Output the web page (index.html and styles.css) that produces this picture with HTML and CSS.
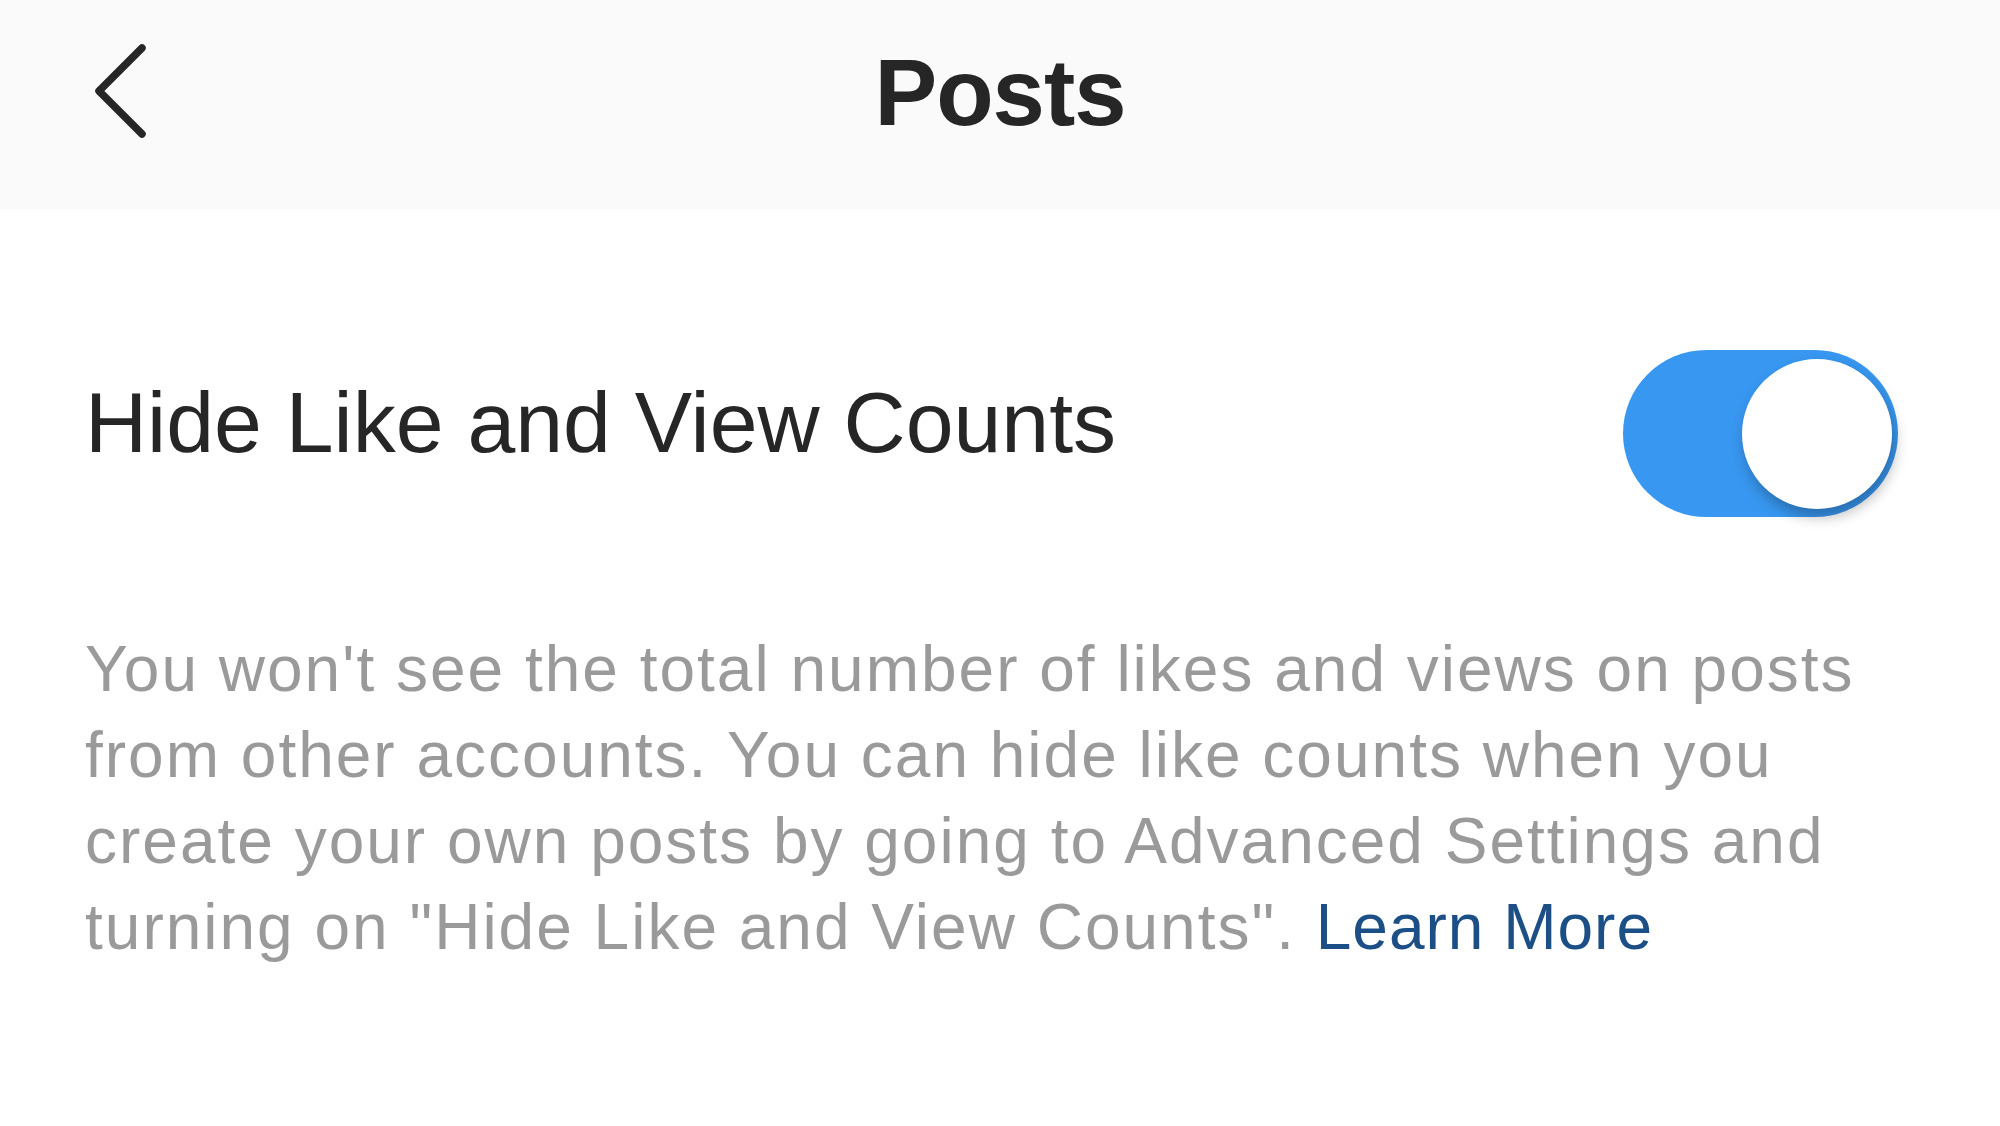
FILE: index.html
```html
<!DOCTYPE html>
<html>
<head>
  <link rel="stylesheet" href="styles.css">
</head>
<body>
  <div class="screen">
    <header class="top-bar">
      <button class="back-button" aria-label="Back">
        <svg width="64" height="104" viewBox="0 0 64 104">
          <polyline points="52,9 9,52 52,95" fill="none" stroke="#262626" stroke-width="7.5" stroke-linecap="round" stroke-linejoin="round"/>
        </svg>
      </button>
      <h1 class="title">Posts</h1>
    </header>

    <main class="settings">
      <div class="setting-row">
        <span class="setting-label">Hide Like and View Counts</span>
        <label class="switch">
          <input type="checkbox" checked>
          <span class="track"><span class="knob"></span></span>
        </label>
      </div>

      <p class="setting-note">
        You won't see the total number of likes and views on posts
        from other accounts. You can hide like counts when you
        create your own posts by going to Advanced Settings and
        turning on "Hide Like and View Counts". <a href="#" class="learn-more">Learn More</a>
      </p>
    </main>
  </div>
</body>
</html>
```

FILE: styles.css
```css
body {
  margin: 0;
  padding: 0;
  background-color: #ffffff;
  font-family: "Liberation Sans", Arial, sans-serif;
  color: #262626;
}

.screen {
  width: 2000px;
  min-height: 1126px;
}

.top-bar {
  height: 209px;
  background-color: #fafafa;
  display: flex;
  align-items: center;
  justify-content: center;
  position: relative;
}

.back-button {
  position: absolute;
  left: 90px;
  top: 39px;
  padding: 0;
  border: none;
  background: none;
  cursor: pointer;
}

.back-button svg {
  display: block;
}

.title {
  margin: 0;
  font-size: 94px;
  font-weight: bold;
  letter-spacing: -1px;
  line-height: 1;
  padding-bottom: 24px;
}

.settings {
  padding: 141px 102px 0 85px;
}

.setting-row {
  display: flex;
  justify-content: space-between;
  align-items: flex-start;
}

.setting-label {
  margin-top: 29px;
  font-size: 86px;
  line-height: 1;
}

.switch input {
  display: none;
}

.track {
  display: block;
  position: relative;
  width: 275px;
  height: 167px;
  border-radius: 84px;
  background-color: #3897f0;
}

.knob {
  position: absolute;
  top: 9px;
  right: 6px;
  width: 150px;
  height: 150px;
  border-radius: 50%;
  background-color: #ffffff;
  box-shadow: 3px 8px 14px rgba(0, 0, 0, 0.28);
}

.setting-note {
  margin: 109px 0 0;
  width: 1800px;
  font-size: 64px;
  line-height: 86px;
  letter-spacing: 2px;
  color: #9a9a9a;
}

.learn-more {
  color: #1d4f87;
  text-decoration: none;
  letter-spacing: 1px;
}
```
